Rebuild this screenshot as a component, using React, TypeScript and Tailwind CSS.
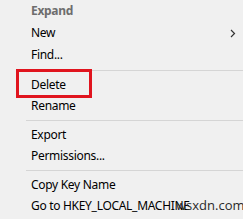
import React from "react";

const font = { fontFamily: '"Noto Sans", "Open Sans", sans-serif' };

function Row({ label, h, children, bold, gray }: { label: string; h: string; children?: React.ReactNode; bold?: boolean; gray?: boolean }) {
  return (
    <div className={`relative flex items-center pl-[31px] text-[12px] tracking-[-0.3px] ${h} ${bold ? "font-bold" : ""} ${gray ? "text-[#6d6d6d]" : "text-black"}`}>
      <span className="leading-none">{label}</span>
      {children}
    </div>
  );
}

function Sep() {
  return (
    <div className="h-[8px] flex items-center pl-[26px]">
      <div className="h-px w-full bg-[#d5d5d5]" />
    </div>
  );
}

export default function App() {
  return (
    <div className="relative w-[243px] h-[219px] bg-[#f0f0f0] overflow-hidden flex flex-col" style={font}>
      <Row label="Expand" h="h-[22px]" bold gray />
      <Row label="New" h="h-[22px]">
        <svg className="absolute left-[230px] top-[7px]" width="6" height="9" viewBox="0 0 6 9">
          <path d="M1 1 L4.5 4.5 L1 8" fill="none" stroke="#333" strokeWidth="1.2" />
        </svg>
      </Row>
      <Row label="Find..." h="h-[22px]" />
      <Sep />
      <Row label="Delete" h="h-[21px]">
        <div className="absolute left-[16px] top-[-5px] w-[76px] h-[29px] border-[3px] border-[#e0141e]" />
      </Row>
      <Row label="Rename" h="h-[21px]" />
      <Sep />
      <Row label="Export" h="h-[21px]" />
      <Row label="Permissions..." h="h-[21px]" />
      <Sep />
      <Row label="Copy Key Name" h="h-[21px]" />
      <Row label="Go to HKEY_LOCAL_MACHINE" h="h-[21px]" />
      <span className="absolute left-[176px] top-[199px] text-[13px] leading-none text-[#2a2a2a]" style={{ fontFamily: '"Open Sans", sans-serif' }}>
        wsxdn.com
      </span>
    </div>
  );
}
